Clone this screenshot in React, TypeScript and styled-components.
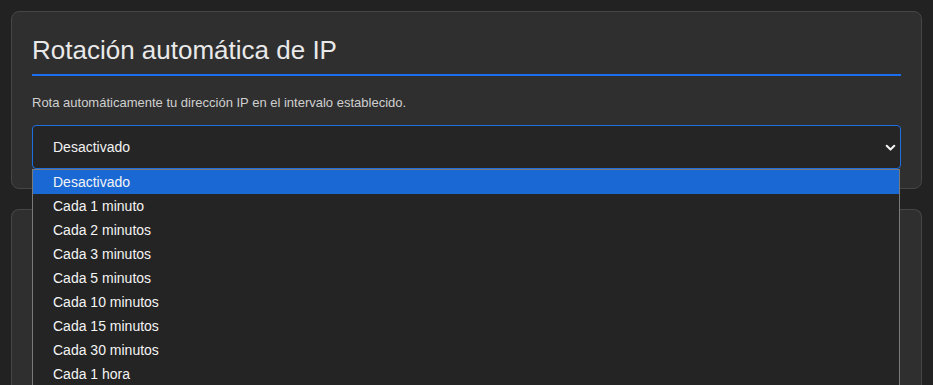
import React, { useState } from 'react'
import styled, { createGlobalStyle } from 'styled-components'

const GlobalStyle = createGlobalStyle`
  html, body {
    margin: 0;
    padding: 0;
    background: #222222;
    font-family: "Liberation Sans", Arial, sans-serif;
    overflow: hidden;
  }
`

const Page = styled.div`
  display: flex;
  flex-direction: column;
  gap: 20px;
  padding: 11px 11px 0 11px;
  height: 385px;
  box-sizing: border-box;
`

const Card = styled.section`
  background: #2f2f2f;
  border: 1px solid #464646;
  border-radius: 8px;
  padding: 20px 20px 19px 20px;
  box-sizing: border-box;
  position: relative;
`

const Title = styled.h2`
  margin: 0;
  padding: 3px 0 8px 0;
  font-size: 26px;
  font-weight: 400;
  color: #e9e9e9;
  border-bottom: 2px solid #1a6ef0;
`

const Desc = styled.p`
  margin: 19px 0 15px 0;
  font-size: 13px;
  color: #cfcfcf;
`

const SelectWrap = styled.div`
  position: relative;
`

const SelectBox = styled.div`
  display: flex;
  align-items: center;
  justify-content: space-between;
  height: 44px;
  box-sizing: border-box;
  padding: 0 4px 0 20px;
  background: #252525;
  border: 1px solid #1f6fe0;
  border-radius: 4px;
  color: #f2f2f2;
  font-size: 14px;
  cursor: pointer;
`

const Chevron = styled.svg`
  width: 11px;
  height: 11px;
`

const Menu = styled.ul`
  position: absolute;
  top: 44px;
  left: 0;
  right: 1px;
  margin: 0;
  padding: 0;
  list-style: none;
  background: #242424;
  border: 1px solid #7a7a7a;
  border-bottom: none;
  z-index: 10;
`

const Option = styled.li<{ $active: boolean }>`
  height: 24px;
  line-height: 24px;
  padding-left: 20px;
  font-size: 14px;
  color: #f4f4f4;
  background: ${p => (p.$active ? '#1a68d4' : 'transparent')};
`

const EmptyCard = styled(Card)`
  flex: 1;
  border-bottom: none;
  border-bottom-left-radius: 0;
  border-bottom-right-radius: 0;
`

const opciones = [
  'Desactivado',
  'Cada 1 minuto',
  'Cada 2 minutos',
  'Cada 3 minutos',
  'Cada 5 minutos',
  'Cada 10 minutos',
  'Cada 15 minutos',
  'Cada 30 minutos',
  'Cada 1 hora',
]

export default function App() {
  const [valor, setValor] = useState(opciones[0])
  return (
    <>
      <GlobalStyle />
      <Page>
        <Card>
          <Title>Rotación automática de IP</Title>
          <Desc>Rota automáticamente tu dirección IP en el intervalo establecido.</Desc>
          <SelectWrap>
            <SelectBox>
              <span>{valor}</span>
              <Chevron viewBox="0 0 16 16">
                <path d="M2.5 5.5l5.5 5.5 5.5-5.5" fill="none" stroke="#f2f2f2" strokeWidth="3" strokeLinecap="round" strokeLinejoin="round" />
              </Chevron>
            </SelectBox>
            <Menu>
              {opciones.map(o => (
                <Option key={o} $active={o === valor} onClick={() => setValor(o)}>
                  {o}
                </Option>
              ))}
            </Menu>
          </SelectWrap>
        </Card>
        <EmptyCard />
      </Page>
    </>
  )
}
